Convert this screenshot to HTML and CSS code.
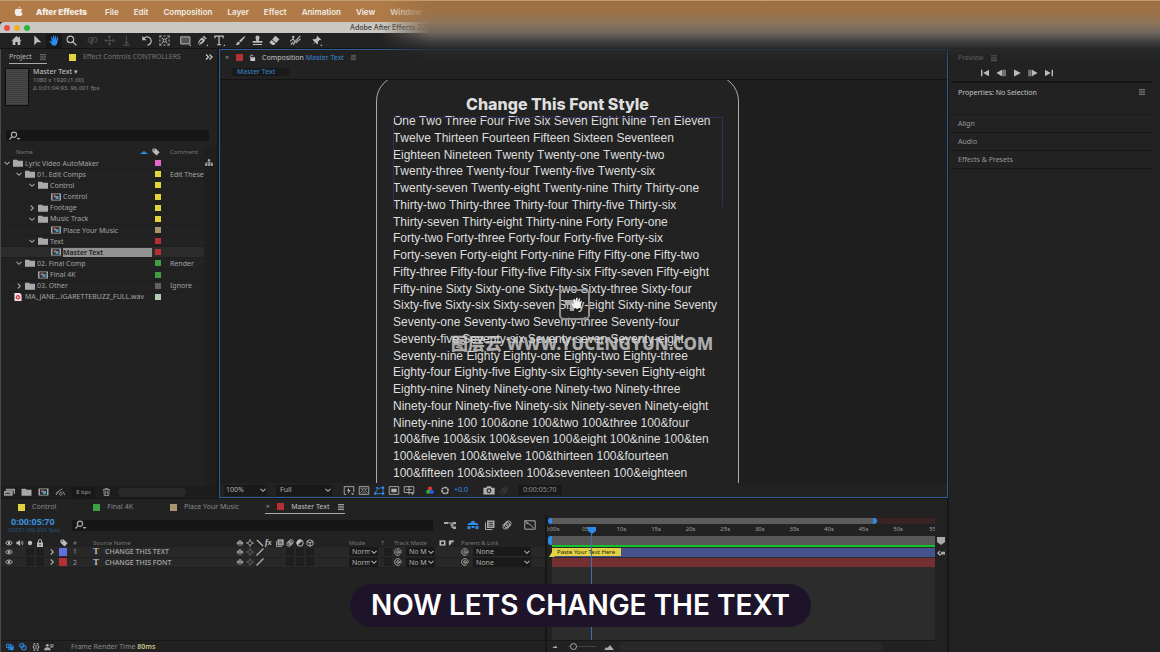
FILE: index.html
```html
<!DOCTYPE html>
<html lang="en">
<head>
<meta charset="utf-8">
<title>Adobe After Effects</title>
<link rel="stylesheet" href="styles.css">
</head>
<body>
<svg class="defs" aria-hidden="true">
  <symbol id="apple" viewBox="0 0 12 12"><path fill="currentColor" d="M8 .5c.1 1-.8 2.100-1.900 2.200C6 1.700 7 .7 8 .5zM8.100 3c.8 0 1.500.4 2 1-1.700 1-1.400 3.500.4 4.200-.5 1.400-1.400 2.800-2.400 2.800-.7 0-1-.4-1.800-.4s-1.200.4-1.800.4C3.200 11 1.800 8.500 1.800 6.500 1.800 4.300 3.100 3 4.500 3c.8 0 1.300.4 1.800.4S7.300 3 8.100 3z"/></symbol>
  <symbol id="home" viewBox="0 0 12 12"><path fill="currentColor" d="M6 1L.5 6.200h1.400V11h2.900V7.600h2.400V11h2.900V6.200h1.400L9.800 4.600V2H8.500v1.400z"/></symbol>
  <symbol id="arrow" viewBox="0 0 12 12"><path fill="currentColor" d="M2.500.5v11L5.400 8h4.800z"/></symbol>
  <symbol id="hand" viewBox="0 0 12 12"><path fill="currentColor" d="M4 11.500C2.800 10.200 1.800 8.500.6 7.200c-.4-.8.5-1.200 1.100-.7L3.200 7.800 2.300 2.700c0-.8 1-.9 1.200-.2l.9 3L4.500 1c.1-.8 1.200-.8 1.300 0L6 5.300 6.900 1.200c.2-.7 1.200-.5 1.200.3l-.4 4.200 1.400-2.900c.4-.6 1.300-.2 1.100.5L9 8.500c-.3 1.200-.8 2.200-1.500 3z"/></symbol>
  <symbol id="lens" viewBox="0 0 12 12"><circle cx="4.800" cy="4.800" r="3.600" fill="none" stroke="currentColor" stroke-width="1.200"/><path d="M7.500 7.500l3.800 3.800" stroke="currentColor" stroke-width="1.500"/></symbol>
  <symbol id="find" viewBox="0 0 12 10"><circle cx="5" cy="3.700" r="2.600" fill="none" stroke="currentColor" stroke-width="1.200"/><path d="M3 5.600L.5 8.500" stroke="currentColor" stroke-width="1.300"/><path fill="currentColor" d="M7.500 7h4L9.500 9z"/></symbol>
  <symbol id="orbit" viewBox="0 0 12 12"><path fill="none" stroke="currentColor" stroke-width="1.200" d="M5.500 8.500C1 8.500-.5 5 3 3.500s8-1 8 2c0 1.300-1 2-2.500 2.500M4 6.500l2 2-2 2"/><circle cx="6" cy="5.500" r="1.800" fill="currentColor"/></symbol>
  <symbol id="move" viewBox="0 0 12 12"><path fill="none" stroke="currentColor" stroke-width="1.200" d="M6 1v10M1 6h10M4.500 2.500L6 1l1.500 1.500M4.500 9.500L6 11l1.500-1.500M2.500 4.500L1 6l1.500 1.500M9.500 4.500L11 6 9.500 7.500"/></symbol>
  <symbol id="dolly" viewBox="0 0 12 12"><path fill="none" stroke="currentColor" stroke-width="1.200" d="M6 .5v9M4 7.500l2 2 2-2M2.500 11h7"/></symbol>
  <symbol id="rotate" viewBox="0 0 12 12"><path fill="none" stroke="currentColor" stroke-width="1.300" d="M2 3.800A4.500 4.500 0 1 1 6 11"/><path fill="currentColor" d="M.3 1.200v4.600H5z"/></symbol>
  <symbol id="anchor" viewBox="0 0 12 12"><path fill="none" stroke="currentColor" stroke-width="1.100" d="M1 3V1h2M5 1h2M9 1h2v2M11 5v2M11 9v2H9M7 11H5M3 11H1V9M1 7V5M3 3l1.500 1.500M9 3L7.500 4.500M3 9l1.500-1.500M9 9L7.500 7.500"/><circle cx="6" cy="6" r="1.500" fill="none" stroke="currentColor"/></symbol>
  <symbol id="rect" viewBox="0 0 12 12"><path fill="#555" stroke="currentColor" d="M.8 2h10v7.800h-10z"/><path fill="currentColor" d="M12 12h-2l2-2z"/></symbol>
  <symbol id="pen" viewBox="0 0 12 12"><path fill="currentColor" d="M7.500.8l3 3-1.200 1.200-3-3zM5.800 2.600l2.900 2.900C8 8.200 5.500 10 1.500 11L4.600 7.400a1 1 0 1 0-.8-.8L.8 10.200C1.800 6.500 3.200 3.700 5.800 2.600zM12 12h-2l2-2z"/></symbol>
  <symbol id="type" viewBox="0 0 12 12"><path fill="none" stroke="currentColor" stroke-width="1.400" d="M1 3.500V1.200h9v2.300M5.500 1.200v9.300M3.500 10.400h4"/><path fill="currentColor" d="M12 12h-2l2-2z"/></symbol>
  <symbol id="brush" viewBox="0 0 12 12"><path fill="currentColor" d="M11.500.7C9 2 6 4.500 4.500 6.500l1.300 1.300C8 6.200 10.500 3.200 11.500.7zM4 7.200C2 7.500 2.600 9.500.7 10.500c2.200.9 4.600 0 4.600-2z"/></symbol>
  <symbol id="stamp" viewBox="0 0 12 12"><path fill="currentColor" d="M4.600 6.500C4.800 4.800 3.800 4 3.800 2.800a2.200 2.200 0 0 1 4.400 0C8.200 4 7.200 4.800 7.400 6.500h3.900v2H.7v-2zM1 9.800h10V11H1z"/></symbol>
  <symbol id="eraser" viewBox="0 0 12 12"><path fill="currentColor" d="M7 .8l4.400 3.900-3.600 4-4.400-3.900zM2.800 5.500l4.300 3.900L5.800 11H3.500L.7 8.400v-.7z"/></symbol>
  <symbol id="roto" viewBox="0 0 12 12"><circle cx="3.500" cy="2" r="1.300" fill="currentColor"/><path fill="none" stroke="currentColor" stroke-width="1.200" d="M0 7l3.500-3 2 3.500L3.500 11M5.500 7.500L11 1M6.500 8.500L11.500 4M1 10.500L3.500 7.500"/></symbol>
  <symbol id="pin" viewBox="0 0 12 12"><path fill="currentColor" d="M6.700.8l4.500 4.500-1.200.5-.7-.3L7.500 7.400l.1 2.100-.8.800L4.500 8l-3.700 3.300L4 7.500 1.700 5.200l.8-.8 2.100.1 1.900-1.800-.3-.7zM12 12h-2l2-2z"/></symbol>
  <symbol id="menu" viewBox="0 0 8 8"><path stroke="currentColor" stroke-width=".8" d="M1 1.500h6M1 3.200h6M1 4.900h6M1 6.600h6"/></symbol>
  <symbol id="more" viewBox="0 0 10 8"><path fill="none" stroke="currentColor" stroke-width="1.200" d="M2 1.500L4.500 4 2 6.500M5.500 1.500L8 4 5.500 6.500"/></symbol>
  <symbol id="lockopen" viewBox="0 0 8 8"><path fill="none" stroke="currentColor" d="M1.500 4V2.500a1.700 1.700 0 0 1 3.300 0"/><path fill="currentColor" d="M1.500 3.700h5.500V8H1.500z"/></symbol>
  <symbol id="down" viewBox="0 0 8 8"><path fill="none" stroke="currentColor" stroke-width="1.100" d="M1.500 2.800L4 5.300l2.500-2.500"/></symbol>
  <symbol id="right" viewBox="0 0 8 8"><path fill="none" stroke="currentColor" stroke-width="1.100" d="M2.800 1.500L5.300 4 2.800 6.500"/></symbol>
  <symbol id="folder" viewBox="0 0 10 8"><path fill="#a9a9a9" d="M0 .8h4l1 1h5v6H0z"/></symbol>
  <symbol id="comp" viewBox="0 0 10 8"><path fill="#999" d="M0 .4h10v7.200H0z"/><path fill="#1b2a30" d="M1.500 1.300h7v5.400h-7z"/><circle cx="4" cy="3.200" r="1.500" fill="#c5574b"/><path fill="#4c9bc0" d="M4.600 3h3v3h-3z"/><path stroke="#ccc" stroke-width=".6" d="M.7 1v6M9.300 1v6" stroke-dasharray="1 1"/></symbol>
  <symbol id="audiofile" viewBox="0 0 8 9"><path fill="#f4dfe2" d="M0 0h6l2 2v7H0z"/><circle cx="4" cy="4.800" r="2.500" fill="#d13b4c"/><path fill="#fff" d="M3.200 3.500l2 1.300-2 1.300z"/></symbol>
  <symbol id="tag" viewBox="0 0 10 10"><path fill="currentColor" d="M.5 1L4.500.5l5 4.700-3.800 4.300L.7 4.800z"/><circle cx="2.600" cy="2.500" r=".8" fill="#222"/></symbol>
  <symbol id="flow" viewBox="0 0 10 8"><path fill="currentColor" d="M3.500 0h3v2.500h-3zM0 5.300h3V8H0zM3.700 5.300h2.700V8H3.700zM7 5.300h3V8H7z"/><path fill="none" stroke="currentColor" stroke-width=".8" d="M5 2v4M1.500 6V4h7v2"/></symbol>
  <symbol id="footage" viewBox="0 0 12 8"><path fill="currentColor" d="M2 .5h10v5.500h-1.500V2.500H2zM0 3h9.500v5H0z"/><path stroke="#222" d="M1.500 5.500h5"/></symbol>
  <symbol id="person" viewBox="0 0 12 8"><circle cx="4" cy="2" r="1.700" fill="currentColor"/><path fill="currentColor" d="M0 7.800q.3-3.500 4-3.500t4 3.500zM7 1h5v1.300H7zM7.500 3.200H11v1.300H7.500z"/></symbol>
  <symbol id="gauge" viewBox="0 0 12 9"><path fill="none" stroke="currentColor" d="M.5 6L8 .8M1 8l3-4.500M5 7c0-3 3-3 3-1s-3 3-3 1M9 4l2 4"/></symbol>
  <symbol id="trash" viewBox="0 0 9 9"><path fill="none" stroke="currentColor" d="M.5 1.800h8M3 1.500V.5h3v1M1.500 2l.5 6.500h5L7.500 2M3.500 3.200v4M5.500 3.200v4"/></symbol>
  <symbol id="eye" viewBox="0 0 10 8"><path fill="none" stroke="currentColor" stroke-width="1.200" d="M.8 4C2.500.8 7.500.8 9.200 4 7.500 7.200 2.500 7.200.8 4z"/><circle cx="5" cy="4" r="1.600" fill="currentColor"/></symbol>
  <symbol id="speaker" viewBox="0 0 10 8"><path fill="currentColor" d="M.5 2.500h2L5 .3v7.400L2.500 5.500h-2z"/><path fill="none" stroke="currentColor" stroke-width=".9" d="M6.300 2.300q1.300 1.700 0 3.400M7.700 1q2.300 3 0 6"/></symbol>
  <symbol id="dot" viewBox="0 0 8 8"><circle cx="4" cy="4" r="2.200" fill="currentColor"/></symbol>
  <symbol id="lock" viewBox="0 0 8 8"><path fill="none" stroke="currentColor" d="M2.300 4V2.200a1.700 1.700 0 0 1 3.400 0V4"/><path fill="currentColor" d="M1 3.500h6V8H1z"/><path stroke="#222" d="M4 5v1.500"/></symbol>
  <symbol id="shy" viewBox="0 0 10 8"><path fill="currentColor" d="M.8 5C1 3 2 2.500 3 2.500 3 0 7 0 7 2.500 8 2.500 9 3 9.200 5z"/><path fill="none" stroke="currentColor" d="M5 4v4M2.500 5v2M7.500 5v2"/><path stroke="#222" stroke-width=".7" d="M4 1.500v3M6 1.500v3"/></symbol>
  <symbol id="sun" viewBox="0 0 8 8"><path fill="none" stroke="currentColor" d="M4 1.500L6.500 4 4 6.500 1.500 4z"/><path stroke="currentColor" stroke-width=".8" d="M4 0v1.500M4 6.500V8M0 4h1.500M6.500 4H8"/></symbol>
  <symbol id="slash" viewBox="0 0 8 8"><path stroke="currentColor" stroke-width="1.200" d="M.5 7.500l7-7"/></symbol>
  <symbol id="back" viewBox="0 0 8 8"><path stroke="currentColor" stroke-width="1.200" d="M1 1l6 6"/></symbol>
  <symbol id="blend" viewBox="0 0 10 10"><path fill="none" stroke="currentColor" d="M.5 2.500v7h7"/><path fill="currentColor" d="M2 .5h7.500v7.500H2z"/><path stroke="#222" stroke-width=".8" d="M3.500 2.500h4.500M3.500 4.300h4.500M3.500 6.100h4.500"/></symbol>
  <symbol id="blur" viewBox="0 0 10 10"><circle cx="6.400" cy="3.600" r="2.700" fill="none" stroke="currentColor"/><circle cx="5" cy="5" r="2.700" fill="none" stroke="currentColor"/><circle cx="3.600" cy="6.400" r="2.700" fill="none" stroke="currentColor"/></symbol>
  <symbol id="adjust" viewBox="0 0 8 8"><circle cx="4" cy="4" r="3.200" fill="none" stroke="currentColor"/><path fill="currentColor" d="M6.300 1.700A3.200 3.200 0 1 0 1.700 6.300z"/></symbol>
  <symbol id="cube" viewBox="0 0 8 8"><path fill="none" stroke="currentColor" stroke-width=".9" d="M4 .7l3 1.600v3.400L4 7.300 1 5.700V2.300zM1 2.300l3 1.500 3-1.500M4 3.800v3.500"/></symbol>
  <symbol id="whip" viewBox="0 0 8 8"><path fill="none" stroke="currentColor" stroke-width=".9" d="M5.300 4A1.300 1.300 0 1 1 4 2.700c2 0 1.500 3 2.500 2.500C8 4 6.500.7 4 .7a3.300 3.300 0 1 0 1.800 6"/></symbol>
  <symbol id="matte" viewBox="0 0 8 8"><path fill="currentColor" d="M0 .5h8v7H0z"/><circle cx="4" cy="4" r="2.100" fill="#222"/></symbol>
  <symbol id="invert" viewBox="0 0 8 8"><path fill="currentColor" d="M.5.5h7.200L5.500 4 4 5 .5 7.500z"/><path fill="#222" d="M3.500 3h2v2h-2z"/></symbol>
  <symbol id="flowchart" viewBox="0 0 12 10"><path fill="none" stroke="currentColor" stroke-width="1.100" d="M3 3h5v4.500h2M3 3h7"/><path fill="currentColor" d="M0 2h4v2H0zM9 2h3v2.200H9zM6.500 4.500h3v1.500h-3zM9 6.500h3V9H9z"/></symbol>
  <symbol id="graph" viewBox="0 0 12 10"><path fill="none" stroke="currentColor" d="M.8.8h10.400v8.400H.8zM2 3q4 0 7.500 5M1 .5l3 3"/></symbol>
  <symbol id="shyon" viewBox="0 0 12 10"><path fill="currentColor" d="M.5 5C1 3 3 2.500 4 3c0-3 4-3 4 0 1-.5 3 0 3.500 2zM.5 6h3v3h-3zM4.500 6h3v2h-3zM8.500 6h3v3h-3z"/></symbol>
  <symbol id="first" viewBox="0 0 10 8"><path fill="currentColor" d="M1 .8h1.400v6.400H1zM9 .8v6.400L3.200 4z"/></symbol>
  <symbol id="prev" viewBox="0 0 10 8"><path fill="currentColor" d="M6 .8v6.400L.4 4zM6.600.8h1v6.400h-1zM8.500.8h1v6.400h-1z"/></symbol>
  <symbol id="play" viewBox="0 0 10 8"><path fill="currentColor" d="M2 .5v7L8.800 4z"/></symbol>
  <symbol id="next" viewBox="0 0 10 8"><path fill="currentColor" d="M4 .8v6.400L9.600 4zM2.400.8h1v6.400h-1zM.5.8h1v6.400h-1z"/></symbol>
  <symbol id="last" viewBox="0 0 10 8"><path fill="currentColor" d="M7.600.8H9v6.400H7.600zM1 .8v6.400L6.800 4z"/></symbol>
  <symbol id="fast" viewBox="0 0 12 10"><path fill="none" stroke="currentColor" d="M3 9.300H.7V.7h10.600v6"/><path fill="currentColor" d="M6 2L3.500 5.500h2L4.500 9 8 4.700H6zM8 8h4l-2 2z"/></symbol>
  <symbol id="grid" viewBox="0 0 12 10"><path fill="none" stroke="currentColor" d="M.7.7h10.600v8.600H.7z"/><path fill="none" stroke="currentColor" stroke-width=".8" d="M2 2.500l3 2-3 3M10 2.500l-3 2 3 3M4 2l2 1.500L8 2M4 8l2-1.500L8 8"/></symbol>
  <symbol id="mask" viewBox="0 0 12 10"><path fill="none" stroke="currentColor" d="M2 8.500Q3 3 8 2h2.500v6.500z"/><path fill="currentColor" d="M.5 7.200h2.500v2.500H.5zM9.300.5h2.500V3H9.300zM9.300 7.200h2.500v2.500H9.300zM3 1h2v2H3z"/></symbol>
  <symbol id="region" viewBox="0 0 12 10"><path fill="none" stroke="currentColor" d="M.7.7h10.600v8.600H.7z"/><path fill="currentColor" d="M3 3h6v4H3z"/></symbol>
  <symbol id="guides" viewBox="0 0 12 10"><path fill="none" stroke="currentColor" d="M.7.7h10.600v6.600H.7zM6 0v9.500M3 4h6"/><path fill="currentColor" d="M8 8h4l-2 2z"/></symbol>
  <symbol id="rgb" viewBox="0 0 10 10"><circle cx="5" cy="3" r="2.400" fill="#e03333"/><circle cx="3" cy="6.500" r="2.400" fill="#28b23a"/><circle cx="7" cy="6.500" r="2.400" fill="#3355e6"/></symbol>
  <symbol id="shutter" viewBox="0 0 10 10"><circle cx="5" cy="5" r="3.400" fill="none" stroke="currentColor" stroke-width="1.800"/><path stroke="#222" stroke-width=".6" d="M2 0l2.500 3M8.500 1L6.500 4M10 6H6.500M6.500 10L5.500 7M1.500 8.500l2-2M0 4h3.500"/></symbol>
  <symbol id="camera" viewBox="0 0 10 8"><path fill="currentColor" d="M0 1.500h2.500L3.500.3h3l1 1.200H10v6H0z"/><circle cx="5" cy="4.300" r="1.700" fill="none" stroke="#222"/></symbol>
  <symbol id="hill" viewBox="0 0 10 6"><path fill="currentColor" d="M0 6l2.500-3 1 1L6 1l4 5z"/></symbol>
  <symbol id="marker" viewBox="0 0 8 8"><path fill="currentColor" d="M0 0h8v5L4 8 0 5z"/></symbol>
  <symbol id="key" viewBox="0 0 10 8"><path fill="currentColor" d="M0 4l3.500-3.500v2H10V6H5.500l-2 1.800z"/><circle cx="4" cy="4" r="1.300" fill="#222"/></symbol>
  <symbol id="layers" viewBox="0 0 10 10"><path fill="none" stroke="currentColor" stroke-width="1.200" d="M.7 1.500h5.500v4H.7zM3 3.500h6v4.500H3z"/><path fill="currentColor" d="M4 5l5 0v4H6z"/></symbol>
  <symbol id="rings" viewBox="0 0 10 10"><path fill="none" stroke="currentColor" stroke-width="1.200" d="M1 1h5v4H1z"/><circle cx="6" cy="6" r="2.800" fill="none" stroke="currentColor" stroke-width="1.300"/></symbol>
  <symbol id="brace" viewBox="0 0 10 10"><path fill="none" stroke="currentColor" stroke-width="1.200" d="M4 .7H2.500V4L1 5l1.500 1v3.300H4M6 .7h1.500V4L9 5 7.500 6v3.300H6M5 2v6"/></symbol>
</svg>

<header class="menubar">
  <svg class="apple"><use href="#apple"/></svg>
  <nav class="menus">
    <button class="menu-btn app">After Effects</button>
    <button class="menu-btn">File</button>
    <button class="menu-btn">Edit</button>
    <button class="menu-btn">Composition</button>
    <button class="menu-btn">Layer</button>
    <button class="menu-btn">Effect</button>
    <button class="menu-btn">Animation</button>
    <button class="menu-btn">View</button>
    <button class="menu-btn">Window</button>
  </nav>
</header>

<div class="titlebar">
  <span class="light red"></span><span class="light amber"></span><span class="light green"></span>
  <span class="window-title">Adobe After Effects 2024</span>
</div>

<div class="toolbar">
  <div class="tools"><button aria-label="Home"><svg><use href="#home"/></svg></button></div>
  <div class="tools">
    <button aria-label="Selection"><svg><use href="#arrow"/></svg></button>
    <button aria-label="Hand" class="active"><svg><use href="#hand"/></svg></button>
    <button aria-label="Zoom"><svg><use href="#lens"/></svg></button>
  </div>
  <div class="tools off">
    <button aria-label="Orbit"><svg><use href="#orbit"/></svg></button>
    <button aria-label="Pan"><svg><use href="#move"/></svg></button>
    <button aria-label="Dolly"><svg><use href="#dolly"/></svg></button>
  </div>
  <div class="tools">
    <button aria-label="Rotate"><svg><use href="#rotate"/></svg></button>
    <button aria-label="Anchor point"><svg><use href="#anchor"/></svg></button>
  </div>
  <div class="tools">
    <button aria-label="Rectangle"><svg><use href="#rect"/></svg></button>
    <button aria-label="Pen"><svg><use href="#pen"/></svg></button>
    <button aria-label="Type"><svg><use href="#type"/></svg></button>
  </div>
  <div class="tools">
    <button aria-label="Brush"><svg><use href="#brush"/></svg></button>
    <button aria-label="Clone stamp"><svg><use href="#stamp"/></svg></button>
    <button aria-label="Eraser"><svg><use href="#eraser"/></svg></button>
  </div>
  <div class="tools"><button aria-label="Roto brush"><svg><use href="#roto"/></svg></button></div>
  <div class="tools"><button aria-label="Puppet pin"><svg><use href="#pin"/></svg></button></div>
</div>

<main class="workspace">
  <section class="project">
    <div class="project-tabs">
      <button class="tab current">Project <svg class="i8 dim"><use href="#menu"/></svg></button>
      <button class="tab faint"><i class="chip yellow"></i>Effect Controls CONTROLLERS</button>
      <button class="more" aria-label="More panels"><svg><use href="#more"/></svg></button>
    </div>
    <div class="item-info">
      <div class="thumb"></div>
      <div>
        <strong>Master Text ▾</strong>
        <p>1080 x 1920 (1.00)</p>
        <p>Δ 0:01:04:93, 96.001 fps</p>
      </div>
    </div>
    <label class="search project-search"><svg><use href="#find"/></svg><input type="text" aria-label="Search project"></label>
    <div class="tree-wrap">
      <table class="tree">
        <colgroup><col class="t-name"><col class="t-tag"><col></colgroup>
        <thead><tr><th><span class="name-head">Name <i class="sort"></i></span></th><th><svg class="i8"><use href="#tag"/></svg></th><th>Comment</th></tr></thead>
        <tbody>
          <tr><td><span class="node"><svg class="i8"><use href="#down"/></svg><svg class="ic"><use href="#folder"/></svg>Lyric Video AutoMaker</span></td><td><i class="sw pink"></i></td><td></td></tr>
          <tr><td><span class="node d1"><svg class="i8"><use href="#down"/></svg><svg class="ic"><use href="#folder"/></svg>01. Edit Comps</span></td><td><i class="sw yellow"></i></td><td>Edit These</td></tr>
          <tr><td><span class="node d2"><svg class="i8"><use href="#down"/></svg><svg class="ic"><use href="#folder"/></svg>Control</span></td><td><i class="sw yellow"></i></td><td></td></tr>
          <tr><td><span class="node d3"><i class="i8"></i><svg class="ic"><use href="#comp"/></svg>Control</span></td><td><i class="sw yellow"></i></td><td></td></tr>
          <tr><td><span class="node d2"><svg class="i8"><use href="#right"/></svg><svg class="ic"><use href="#folder"/></svg>Footage</span></td><td><i class="sw yellow"></i></td><td></td></tr>
          <tr><td><span class="node d2"><svg class="i8"><use href="#down"/></svg><svg class="ic"><use href="#folder"/></svg>Music Track</span></td><td><i class="sw yellow"></i></td><td></td></tr>
          <tr><td><span class="node d3"><i class="i8"></i><svg class="ic"><use href="#comp"/></svg>Place Your Music</span></td><td><i class="sw tan"></i></td><td></td></tr>
          <tr><td><span class="node d2"><svg class="i8"><use href="#down"/></svg><svg class="ic"><use href="#folder"/></svg>Text</span></td><td><i class="sw crimson"></i></td><td></td></tr>
          <tr class="selected"><td><span class="node d3"><i class="i8"></i><svg class="ic"><use href="#comp"/></svg><b>Master Text</b></span></td><td><i class="sw crimson"></i></td><td></td></tr>
          <tr><td><span class="node d1"><svg class="i8"><use href="#down"/></svg><svg class="ic"><use href="#folder"/></svg>02. Final Comp</span></td><td><i class="sw leaf"></i></td><td>Render</td></tr>
          <tr><td><span class="node d1"><i class="i8"></i><i class="nudge"></i><svg class="ic"><use href="#comp"/></svg>Final 4K</span></td><td><i class="sw leaf"></i></td><td></td></tr>
          <tr><td><span class="node d1"><svg class="i8"><use href="#right"/></svg><svg class="ic"><use href="#folder"/></svg>03. Other</span></td><td><i class="sw grey"></i></td><td>Ignore</td></tr>
          <tr><td><span class="node"><i class="i8"></i><svg class="ic"><use href="#audiofile"/></svg>MA_JANE...iGARETTEBUZZ_FULL.wav</span></td><td><i class="sw mint"></i></td><td></td></tr>
        </tbody>
      </table>
      <div class="tree-side"><svg><use href="#flow"/></svg></div>
    </div>
    <div class="project-foot">
      <button aria-label="Interpret footage"><svg><use href="#footage"/></svg></button>
      <button aria-label="New folder"><svg><use href="#folder"/></svg></button>
      <button aria-label="New composition"><svg><use href="#comp"/></svg></button>
      <button aria-label="Project settings"><svg><use href="#gauge"/></svg></button>
      <button class="bpc">8 bpc</button>
      <button aria-label="Delete"><svg><use href="#trash"/></svg></button>
      <div class="scroll"></div>
    </div>
  </section>

  <section class="comp">
    <div class="comp-tab"><span class="x">×</span><i class="chip crimson"></i><svg class="i8"><use href="#lockopen"/></svg><span>Composition <em>Master Text</em></span><svg class="i8 dim"><use href="#menu"/></svg></div>
    <div class="crumbs"><button>Master Text</button></div>
    <div class="viewer">
      <article class="card">
        <h1>Change This Font Style</h1>
        <div class="lines">
          <p>One Two Three Four Five Six Seven Eight Nine Ten Eleven</p>
          <p>Twelve Thirteen Fourteen Fifteen Sixteen Seventeen</p>
          <p>Eighteen Nineteen Twenty Twenty-one Twenty-two</p>
          <p>Twenty-three Twenty-four Twenty-five Twenty-six</p>
          <p>Twenty-seven Twenty-eight Twenty-nine Thirty Thirty-one</p>
          <p>Thirty-two Thirty-three Thirty-four Thirty-five Thirty-six</p>
          <p>Thirty-seven Thirty-eight Thirty-nine Forty Forty-one</p>
          <p>Forty-two Forty-three Forty-four Forty-five Forty-six</p>
          <p>Forty-seven Forty-eight Forty-nine Fifty Fifty-one Fifty-two</p>
          <p>Fifty-three Fifty-four Fifty-five Fifty-six Fifty-seven Fifty-eight</p>
          <p>Fifty-nine Sixty Sixty-one Sixty-two Sixty-three Sixty-four</p>
          <p>Sixty-five Sixty-six Sixty-seven Sixty-eight Sixty-nine Seventy</p>
          <p>Seventy-one Seventy-two Seventy-three Seventy-four</p>
          <p>Seventy-five Seventy-six Seventy-seven Seventy-eight</p>
          <p>Seventy-nine Eighty Eighty-one Eighty-two Eighty-three</p>
          <p>Eighty-four Eighty-five Eighty-six Eighty-seven Eighty-eight</p>
          <p>Eighty-nine Ninety Ninety-one Ninety-two Ninety-three</p>
          <p>Ninety-four Ninety-five Ninety-six Ninety-seven Ninety-eight</p>
          <p>Ninety-nine 100 100&amp;one 100&amp;two 100&amp;three 100&amp;four</p>
          <p>100&amp;five 100&amp;six 100&amp;seven 100&amp;eight 100&amp;nine 100&amp;ten</p>
          <p>100&amp;eleven 100&amp;twelve 100&amp;thirteen 100&amp;fourteen</p>
          <p>100&amp;fifteen 100&amp;sixteen 100&amp;seventeen 100&amp;eighteen</p>
          <div class="bounds"></div>
        </div>
      </article>
      <div class="stamp-box"><svg viewBox="0 0 20 16"><path fill="#aaa" d="M0 3h12v2h3v4H9v5H5V8H0z"/><path fill="#f5f5f5" d="M9 11C8 9 7 8 6.500 7c0-1 1-1 2.500.5L8.500 2.500c.5-1 1.200-.8 1.500 0l.7 2.700.3-4c.5-.9 1.300-.7 1.500 0l.2 4 1-3.500c.6-.8 1.300-.4 1.300.4L14.500 6l1.300-2c.7-.5 1.300 0 1 .8L15 11z"/></svg></div>
      <div class="watermark">图层云 WWW.YUCENGYUN.COM</div>
    </div>
    <div class="comp-foot">
      <span class="drop zoom"><select aria-label="Magnification"><option>100%</option></select><svg class="i8"><use href="#down"/></svg></span>
      <span class="drop res"><select aria-label="Resolution"><option>Full</option></select><svg class="i8"><use href="#down"/></svg></span>
      <div class="view-icons">
        <button aria-label="Fast previews"><svg><use href="#fast"/></svg></button>
        <button aria-label="Transparency grid"><svg><use href="#grid"/></svg></button>
        <button aria-label="Mask visibility" class="active"><svg><use href="#mask"/></svg></button>
        <button aria-label="Region of interest"><svg><use href="#region"/></svg></button>
        <button aria-label="Guides"><svg><use href="#guides"/></svg></button>
      </div>
      <div class="view-icons">
        <button aria-label="Channels"><svg><use href="#rgb"/></svg></button>
        <button aria-label="Reset exposure"><svg><use href="#shutter"/></svg></button>
        <button class="exposure">+0.0</button>
      </div>
      <div class="view-icons">
        <button aria-label="Snapshot"><svg><use href="#camera"/></svg></button>
        <button aria-label="Show snapshot" class="ghost"><svg><use href="#blur"/></svg></button>
      </div>
      <button class="timecode-sm">0:00:05:70</button>
    </div>
  </section>

  <section class="timeline">
    <div class="tl-tabs">
      <button class="tl-tab"><i class="chip yellow"></i>Control</button>
      <button class="tl-tab"><i class="chip leaf"></i>Final 4K</button>
      <button class="tl-tab"><i class="chip tan"></i>Place Your Music</button>
      <button class="tl-tab current"><span class="x">×</span><i class="chip crimson"></i>Master Text<svg class="i8"><use href="#menu"/></svg></button>
    </div>
    <div class="tl-body">
      <div class="tl-left">
        <div class="tl-controls">
          <div class="now"><b>0:00:05:70</b><small>00551 (96.001 fps)</small></div>
          <label class="search tl-search"><svg><use href="#find"/></svg><input type="text" aria-label="Search layers"></label>
          <div class="tl-icons">
            <button aria-label="Mini flowchart"><svg><use href="#flowchart"/></svg></button>
            <button aria-label="Hide shy layers" class="active"><svg><use href="#shyon"/></svg></button>
            <button aria-label="Frame blending"><svg><use href="#blend"/></svg></button>
            <button aria-label="Motion blur"><svg><use href="#blur"/></svg></button>
            <button aria-label="Graph editor"><svg><use href="#graph"/></svg></button>
          </div>
        </div>
        <table class="layers">
          <colgroup><col class="c14"><col class="c10" span="3"><col class="c13"><col class="c11"><col class="c24"><col><col class="c10" span="8"><col class="c34"><col class="c32"><col class="c13"><col class="c45"><col class="c22"><col class="c84"></colgroup>
          <thead><tr>
            <th><svg><use href="#eye"/></svg></th><th><svg><use href="#speaker"/></svg></th><th><svg><use href="#dot"/></svg></th><th><svg><use href="#lock"/></svg></th><th></th><th><svg><use href="#tag"/></svg></th><th class="num">#</th><th class="label">Source Name</th>
            <th><svg><use href="#shy"/></svg></th><th><svg><use href="#sun"/></svg></th><th><svg><use href="#back"/></svg></th><th class="fx">fx</th><th><svg><use href="#blend"/></svg></th><th><svg><use href="#blur"/></svg></th><th><svg><use href="#adjust"/></svg></th><th><svg><use href="#cube"/></svg></th>
            <th></th><th class="label">Mode</th><th class="label">T</th><th class="label">Track Matte</th><th><span class="pair"><svg><use href="#matte"/></svg><svg><use href="#invert"/></svg></span></th><th class="label">Parent &amp; Link</th>
          </tr></thead>
          <tbody>
            <tr><td><svg><use href="#eye"/></svg></td><td></td><td><i class="cell"></i></td><td><i class="cell"></i></td><td><svg class="twirl"><use href="#right"/></svg></td><td><i class="lab blue"></i></td><td class="num">1</td><td><span class="lname"><b>T</b>CHANGE THIS TEXT</span></td>
              <td><svg><use href="#shy"/></svg></td><td class="dim"><svg><use href="#sun"/></svg></td><td><svg><use href="#slash"/></svg></td><td></td><td></td><td><i class="cell"></i></td><td><i class="cell"></i></td><td><i class="cell"></i></td>
              <td></td><td><span class="drop mini"><select aria-label="Mode 1"><option>Normal</option></select><svg><use href="#down"/></svg></span></td><td><i class="cell"></i></td><td><span class="link"><svg><use href="#whip"/></svg><span class="drop mini"><select aria-label="Track matte 1"><option>No Matte</option></select><svg><use href="#down"/></svg></span></span></td><td></td><td><span class="link"><svg><use href="#whip"/></svg><span class="drop parent"><select aria-label="Parent 1"><option>None</option></select><svg><use href="#down"/></svg></span></span></td></tr>
            <tr><td><svg><use href="#eye"/></svg></td><td></td><td><i class="cell"></i></td><td><i class="cell"></i></td><td><svg class="twirl"><use href="#right"/></svg></td><td><i class="lab crimson"></i></td><td class="num">2</td><td><span class="lname"><b>T</b>CHANGE THIS FONT</span></td>
              <td><svg><use href="#shy"/></svg></td><td class="dim"><svg><use href="#sun"/></svg></td><td><svg><use href="#slash"/></svg></td><td></td><td></td><td><i class="cell"></i></td><td><i class="cell"></i></td><td><i class="cell"></i></td>
              <td></td><td><span class="drop mini"><select aria-label="Mode 2"><option>Normal</option></select><svg><use href="#down"/></svg></span></td><td><i class="cell"></i></td><td><span class="link"><svg><use href="#whip"/></svg><span class="drop mini"><select aria-label="Track matte 2"><option>No Matte</option></select><svg><use href="#down"/></svg></span></span></td><td></td><td><span class="link"><svg><use href="#whip"/></svg><span class="drop parent"><select aria-label="Parent 2"><option>None</option></select><svg><use href="#down"/></svg></span></span></td></tr>
          </tbody>
        </table>
        <div class="tl-foot">
          <button aria-label="Layer switches" class="active"><svg><use href="#layers"/></svg></button>
          <button aria-label="Transfer controls" class="active"><svg><use href="#rings"/></svg></button>
          <button aria-label="In and out"><svg><use href="#brace"/></svg></button>
          <button aria-label="Render time"><svg><use href="#person"/></svg></button>
          <span class="render">Frame Render Time <b>80ms</b></span>
        </div>
      </div>
      <div class="tl-right">
        <div class="navigator"><div class="nav-range"></div></div>
        <div class="ruler"><div class="ticks"><span>0:00s</span><span>05s</span><span>10s</span><span>15s</span><span>20s</span><span>25s</span><span>30s</span><span>35s</span><span>40s</span><span>45s</span><span>50s</span><span>55</span></div></div>
        <div class="tracks">
          <div class="workarea"></div>
          <div class="cache"></div>
          <div class="track blue-track"><span class="note">Paste Your Text Here</span></div>
          <div class="track red-track"></div>
        </div>
        <div class="zoombar"><svg><use href="#hill"/></svg><input type="range" aria-label="Timeline zoom" min="0" max="100" value="8"><svg class="big"><use href="#hill"/></svg><div class="scroll"></div></div>
        <div class="playhead"><svg viewBox="0 0 8 8"><path fill="#2d8ceb" d="M0 1h8v4L4 8 0 5z"/></svg></div>
        <div class="tl-side"><svg><use href="#marker"/></svg><svg><use href="#key"/></svg></div>
      </div>
    </div>
  </section>

  <aside class="side">
    <div class="preview">
      <h2 class="faded">Preview <svg class="i8"><use href="#menu"/></svg></h2>
      <div class="transport">
        <button aria-label="First frame"><svg><use href="#first"/></svg></button>
        <button aria-label="Previous frame"><svg><use href="#prev"/></svg></button>
        <button aria-label="Play"><svg><use href="#play"/></svg></button>
        <button aria-label="Next frame"><svg><use href="#next"/></svg></button>
        <button aria-label="Last frame"><svg><use href="#last"/></svg></button>
      </div>
    </div>
    <div class="props"><h2>Properties: No Selection</h2><svg class="i8"><use href="#menu"/></svg></div>
    <button class="fold">Align</button>
    <button class="fold">Audio</button>
    <button class="fold">Effects &amp; Presets</button>
  </aside>
</main>

<div class="haze"></div>
<div class="caption">NOW LETS CHANGE THE TEXT</div>
</body>
</html>
```
FILE: styles.css
```css
* { box-sizing: border-box; }
body {
  margin: 0;
  height: 100vh;
  display: flex;
  flex-direction: column;
  overflow: hidden;
  position: relative;
  background: #222;
  color: #a2a2a2;
  font: 7px/10px "Noto Sans", "Open Sans", sans-serif;
}
h1, h2, p { margin: 0; font-weight: 400; }
button, input, select { font: inherit; color: inherit; background: none; border: 0; margin: 0; padding: 0; }
button { display: inline-flex; align-items: center; justify-content: center; white-space: nowrap; }
select { appearance: none; outline: 0; }
svg { display: block; flex: none; overflow: visible; }
em, i { font-style: normal; }
.defs { position: absolute; width: 0; height: 0; }
.i8 { width: 8px; height: 8px; flex: none; }
.active { color: #2d8ceb; }
.dim { color: #777; }

.yellow { background: #e3d33c; }
.leaf { background: #3f9f43; }
.tan { background: #a8946e; }
.crimson { background: #b53034; }
.pink { background: #e566c8; }
.grey { background: #616161; }
.mint { background: #b0ccb4; }
.blue { background: #6070de; }
.chip { width: 7px; height: 7px; flex: none; }

/* System menu bar */
.menubar { height: 22px; flex: none; display: flex; align-items: center; padding-left: 13px; background: #b07b47; border-top: 1px solid #c39b71; color: #f2ece6; }
.apple { width: 11px; height: 11px; }
.menus { display: flex; gap: 15px; margin-left: 12px; }
.menu-btn { font: 600 8px/12px Inter, sans-serif; }
.menu-btn.app { font-weight: 900; margin-right: 3px; }

.titlebar { height: 11px; flex: none; display: flex; align-items: center; gap: 4px; padding-left: 4px; background: #cbc8c3; border-radius: 4px 0 0 0; }
.light { width: 6px; height: 6px; border-radius: 50%; }
.red { background: #ed4d48; }
.amber { background: #efae31; }
.green { background: #2db43c; }
.window-title { margin-left: 316px; color: #45423f; font: 500 7px/10px Inter, sans-serif; }

.toolbar { height: 16px; flex: none; display: flex; align-items: center; gap: 5px; padding-left: 8px; border-bottom: 1px solid #141414; color: #bdbdbd; }
.tools { display: flex; gap: 1px; }
.tools button { width: 16px; height: 14px; }
.tools svg { width: 11px; height: 11px; }
.tools.off { color: #4c4c4c; }
.tools .active { background: #181818; color: #2d8ceb; }

.workspace { flex: 1; min-height: 0; display: grid; grid-template-columns: 218px 1fr 212px; grid-template-rows: 1fr 154px; border-left: 1px solid #4a4a4a; }

/* Project panel */
.project { min-height: 0; display: flex; flex-direction: column; border-right: 2px solid #161616; }
.project-tabs { display: flex; align-items: flex-start; padding: 1px 3px 0 8px; }
.tab { height: 14px; gap: 7px; }
.tab.current { color: #bbb; border-bottom: 1px solid #aaa; margin-right: 22px; }
.tab.faint { color: #777; }
.more { margin-left: auto; height: 14px; color: #ccc; }
.more svg { width: 10px; height: 8px; }
.item-info { display: flex; gap: 4px; padding: 4px 4px 0; line-height: 8px; }
.item-info strong { display: block; color: #bbb; font-weight: 500; }
.item-info p { font-size: 6px; color: #888; }
.thumb { width: 24px; height: 38px; border: 1px solid #0e0e0e; background: repeating-linear-gradient(#4a4a4a 0 1px, #3c3c3c 1px 2px); }
.search { display: flex; align-items: center; background: #161616; color: #aaa; }
.search svg { width: 12px; height: 10px; margin: 0 3px; }
.search input { flex: 1; min-width: 0; outline: 0; }
.project-search { height: 11px; margin: 24px 8px 0 5px; }
.tree-wrap { flex: 1; display: flex; margin-top: 6px; min-height: 0; }
.tree { flex: 1; height: 155px; table-layout: fixed; border-collapse: collapse; }
.t-name { width: 151px; }
.t-tag { width: 18px; }
.tree th { padding: 0; text-align: left; font-weight: 400; font-size: 6px; color: #777; }
.tree th svg { color: #bbb; }
.tree td { padding: 0; white-space: nowrap; border-top: 1px solid #1e1e1e; line-height: 9px; }
.name-head { display: flex; align-items: center; justify-content: space-between; padding: 0 4px 0 15px; }
.sort { border: 4px solid transparent; border-top: 0; border-bottom: 3px solid #2d8ceb; }
.node { display: flex; align-items: center; gap: 2px; padding-left: 2px; }
.node.d1 { padding-left: 14px; }
.node.d2 { padding-left: 27px; }
.node.d3 { padding-left: 40px; }
.node .ic { width: 10px; height: 8px; }
.nudge { width: 11px; }
.node b { flex: 1; background: #929292; color: #1c1c1c; font-weight: 600; }
.selected { background: #2c2c2c; }
.sw { display: block; width: 6px; height: 6px; margin-left: 3px; }
.tree-side { width: 13px; padding: 12px 1px; background: #1f1f1f; color: #aaa; }
.tree-side svg { width: 8px; height: 7px; }
.project-foot { height: 12px; display: flex; align-items: center; gap: 6px; padding-left: 3px; color: #999; background: #1d1d1d; }
.project-foot svg { width: 11px; height: 8px; }
.bpc { font-size: 6px; padding: 0 4px; background: #181818; }
.scroll { height: 9px; background: #292929; border-radius: 5px; }
.project-foot .scroll { width: 68px; }

/* Composition panel */
.comp { min-width: 0; min-height: 0; display: flex; flex-direction: column; border: 1px solid #2a5c96; }
.comp-tab { height: 15px; display: flex; align-items: center; gap: 6px; padding-left: 5px; color: #c4c4c4; }
.comp-tab .i8 { width: 7px; height: 7px; }
.comp em { color: #3b86cf; }
.x { color: #999; width: 5px; }
.crumbs { height: 15px; display: flex; align-items: center; padding-left: 12px; border-bottom: 1px solid #141414; }
.crumbs button { height: 8px; padding: 0 14px 0 5px; background: #191919; color: #3b86cf; }
.viewer { flex: 1; min-height: 0; overflow: hidden; position: relative; display: flex; justify-content: center; padding-right: 52px; background: #1e1e1e; }
.card { width: 363px; margin: -5px 0 -30px; padding: 19px 0 31px 16px; border: 1px solid #aaa; border-radius: 26px; background: #222; display: flex; flex-direction: column; color: #dedede; }
.card h1 { font: 800 16px/18px Inter, sans-serif; text-align: center; padding-right: 16px; }
.lines { flex: 1; display: flex; flex-direction: column; justify-content: space-between; position: relative; }
.lines p { font: 12px/16px "Liberation Sans", Arial, sans-serif; font-kerning: none; white-space: nowrap; }
.bounds { position: absolute; top: 4px; left: 0; width: 330px; height: 90px; border: 1px solid #30305a; border-bottom: 0; }
.stamp-box { position: absolute; left: 339px; top: 209px; width: 31px; height: 31px; border: 2px solid #8f8f8f; border-radius: 5px; display: flex; align-items: center; justify-content: center; }
.stamp-box svg { width: 20px; height: 16px; }
.watermark { position: absolute; left: 231px; top: 252px; font: 800 17px/24px "Noto Sans", "Noto Sans CJK SC", sans-serif; color: #d2d2d2cc; white-space: nowrap; }
.comp-foot { height: 14px; display: flex; align-items: center; color: #b0b0b0; }
.drop { display: flex; align-items: center; background: #191919; overflow: hidden; }
.drop select { flex: 1; min-width: 0; width: 100%; }
.zoom { width: 43px; margin-left: 4px; padding-left: 2px; height: 11px; }
.res { width: 56px; margin-left: 9px; padding-left: 4px; height: 11px; }
.view-icons { display: flex; gap: 3px; margin-left: 11px; }
.view-icons svg { width: 12px; height: 9px; }
.view-icons + .view-icons { margin-left: 9px; }
.view-icons + .view-icons + .view-icons { margin-left: 15px; }
.exposure { color: #2d8ceb; }
.ghost { color: #3a3a3a; }
.timecode-sm { margin-left: 8px; padding: 0 5px; background: #191919; color: #8f8f8f; }

/* Timeline */
.timeline { grid-column: 1 / 3; grid-row: 2; min-width: 0; display: flex; flex-direction: column; border-top: 1px solid #161616; border-right: 1px solid #161616; }
.tl-tabs { height: 16px; flex: none; display: flex; align-items: flex-start; gap: 37px; padding: 1px 0 0 17px; }
.tl-tab { height: 14px; gap: 7px; color: #8a8a8a; }
.tl-tab.current { color: #c0c0c0; border-bottom: 1px solid #aaa; margin-left: -11px; gap: 8px; }
.tl-tab.current .chip { margin: 0 -1px; }
.tl-body { flex: 1; min-height: 0; display: grid; grid-template-columns: 546px 1fr; }
.tl-left { display: flex; flex-direction: column; border-right: 2px solid #161616; }
.tl-controls { height: 23px; display: flex; align-items: center; padding: 0 9px 3px 7px; }
.now { width: 64px; padding-left: 3px; display: flex; flex-direction: column; }
.now b { font-size: 9px; line-height: 10px; color: #3a90de; }
.now small { margin-left: -3px; font-size: 6px; line-height: 7px; color: #2a5580; }
.tl-search { flex: 1; height: 11px; }
.tl-icons { display: flex; gap: 5px; margin-left: 11px; color: #aaa; }
.tl-icons .active { margin-left: 6px; color: #2d8ceb; }
.tl-icons svg { width: 12px; height: 10px; }
.tl-icons button:last-child { margin-left: 6px; }
.layers { table-layout: fixed; border-collapse: collapse; width: 100%; }
.layers th, .layers td { height: 10px; padding: 0; font-weight: 400; text-align: left; white-space: nowrap; line-height: 9px; }
.layers th { height: 9px; line-height: 8px; font-size: 6px; color: #bbb; }
.layers th.label, .layers .num { color: #777; }
.layers td { border-bottom: 1px solid #202020; background: #282828; color: #b0b0b0; }
.layers td.num { color: #999; }
.layers td.dim { color: #6a6a6a; }
.layers .num { padding-left: 4px; }
.layers svg { width: 8px; height: 8px; margin: 0 auto; }
.layers .fx { font: italic 600 8px/8px "Liberation Serif", serif; color: #ccc; }
.layers tr > :first-child svg { margin-left: 4px; }
.c10 { width: 10px; } .c11 { width: 11px; } .c13 { width: 13px; } .c14 { width: 14px; } .c22 { width: 22px; } .c24 { width: 24px; }
.c32 { width: 32px; } .c34 { width: 34px; } .c45 { width: 45px; } .c84 { width: 84px; }
.cell { display: block; width: 8px; height: 8px; margin: 0 auto; background: #1e1e1e; }
.lab { display: block; width: 8px; height: 8px; margin-left: 1px; }
.lname { display: flex; gap: 6px; color: #a8a8a8; font-weight: 500; }
.lname b { font: 700 9px/9px "Liberation Serif", serif; color: #bbb; }
.pair { display: flex; gap: 2px; }
.pair svg { width: 7px; height: 6px; margin: 0; }
.link { display: flex; align-items: center; gap: 4px; }
.layers .link > svg { margin: 0; }
.mini { width: 29px; height: 9px; padding-left: 3px; }
.parent { width: 58px; height: 9px; padding-left: 3px; }
.tl-foot { height: 12px; margin-top: auto; display: flex; align-items: center; gap: 3px; padding-left: 4px; border-top: 1px solid #181818; color: #aaa; }
.tl-foot svg { width: 10px; height: 8px; }
.render { margin-left: 14px; color: #888; }
.render b { color: #c9c78e; font-weight: 600; }

.tl-right { position: relative; min-width: 0; display: flex; flex-direction: column; padding: 3px 12px 0 0; }
.navigator { height: 6px; margin-left: 1px; background: #3a2322; }
.nav-range { width: 85%; height: 6px; background: #5c5c5c; border: 0 solid #2d8ceb; border-width: 0 4px; border-radius: 4px; }
.ruler { height: 12px; overflow: hidden; font-size: 6px; color: #a0a0a0; }
.ticks { display: grid; grid-template-columns: repeat(12, 1fr); margin: 0 -15px 0 -12px; text-align: center; line-height: 10px; }
.tracks { flex: 1; margin-left: 5px; background: #2c2c2c; }
.workarea { height: 9px; margin-left: -4px; background: #575757; border-left: 4px solid #2d8ceb; border-radius: 3px 0 0 3px; }
.cache { height: 2px; margin-bottom: 1px; background: #16c22c; }
.track { height: 9px; margin-bottom: 1px; position: relative; }
.blue-track { background: #46528c; }
.red-track { background: #743031; }
.note { display: block; width: max-content; height: 8px; padding: 0 6px 0 5px; background: #e2d244; color: #26230a; font-size: 6px; line-height: 8px; }
.note::before { content: ""; position: absolute; left: -3px; bottom: 0; border: 3px solid transparent; border-top: 0; border-bottom: 5px solid #e2d244; }
.zoombar { height: 12px; display: flex; align-items: center; padding-left: 5px; color: #aaa; border-top: 1px solid #181818; }
.zoombar svg { width: 6px; height: 3px; }
.zoombar .big { width: 10px; height: 6px; }
.zoombar input { appearance: none; width: 28px; height: 1px; margin: 0 8px 0 10px; background: #444; }
.zoombar input::-webkit-slider-thumb { appearance: none; width: 7px; height: 7px; border: 1px solid #aaa; border-radius: 50%; background: #222; }
.zoombar .scroll { width: 264px; margin-left: 5px; }
.playhead { position: absolute; left: 41px; top: 11px; bottom: 12px; width: 8px; }
.playhead::after { content: ""; position: absolute; left: 3px; top: 7px; bottom: 0; width: 1px; background: #3a70b4; }
.playhead svg { width: 8px; height: 8px; }
.tl-side { position: absolute; right: 2px; top: 22px; display: flex; flex-direction: column; gap: 4px; color: #aaa; }
.tl-side svg { width: 8px; height: 8px; }

/* Right column */
.side { grid-column: 3; grid-row: 1 / 3; padding: 0 8px 0 2px; border-left: 1px solid #161616; display: flex; flex-direction: column; background: #222; }
.preview { height: 34px; border-bottom: 2px solid #161616; }
.side h2 { display: flex; align-items: center; gap: 7px; margin-left: 7px; font-size: 7px; line-height: 10px; color: #c4c4c4; }
.side h2.faded { padding-top: 4px; color: #6a6a6a; }
.transport { display: flex; gap: 6px; padding: 6px 0 0 29px; color: #bbb; }
.transport svg { width: 10px; height: 8px; }
.props { height: 32px; display: flex; justify-content: space-between; align-items: flex-start; padding: 5px 6px 0 0; border-bottom: 1px solid #1b1b1b; color: #888; }
.fold { height: 18px; flex: none; justify-content: flex-start; padding-left: 7px; border-bottom: 1px solid #161616; color: #999; }

/* Soft strip over the top right of the screen */
.haze { position: absolute; left: 380px; right: 0; top: 1px; height: 64px; pointer-events: none; background: linear-gradient(#a06f43 0, #9c7249 12px, #8d7459 22px, #6f675e 32px, #444240 40px, #2a2b2dcc 48px, #22222200 60px); mask-image: linear-gradient(90deg, transparent, #000 50px); }

.caption { position: absolute; left: 50%; bottom: 25px; margin-left: -230px; width: 461px; height: 43px; border-radius: 22px; background: #1e142a; color: #fff; text-align: center; white-space: nowrap; font: 600 28px/43px Inter, sans-serif; }
```
